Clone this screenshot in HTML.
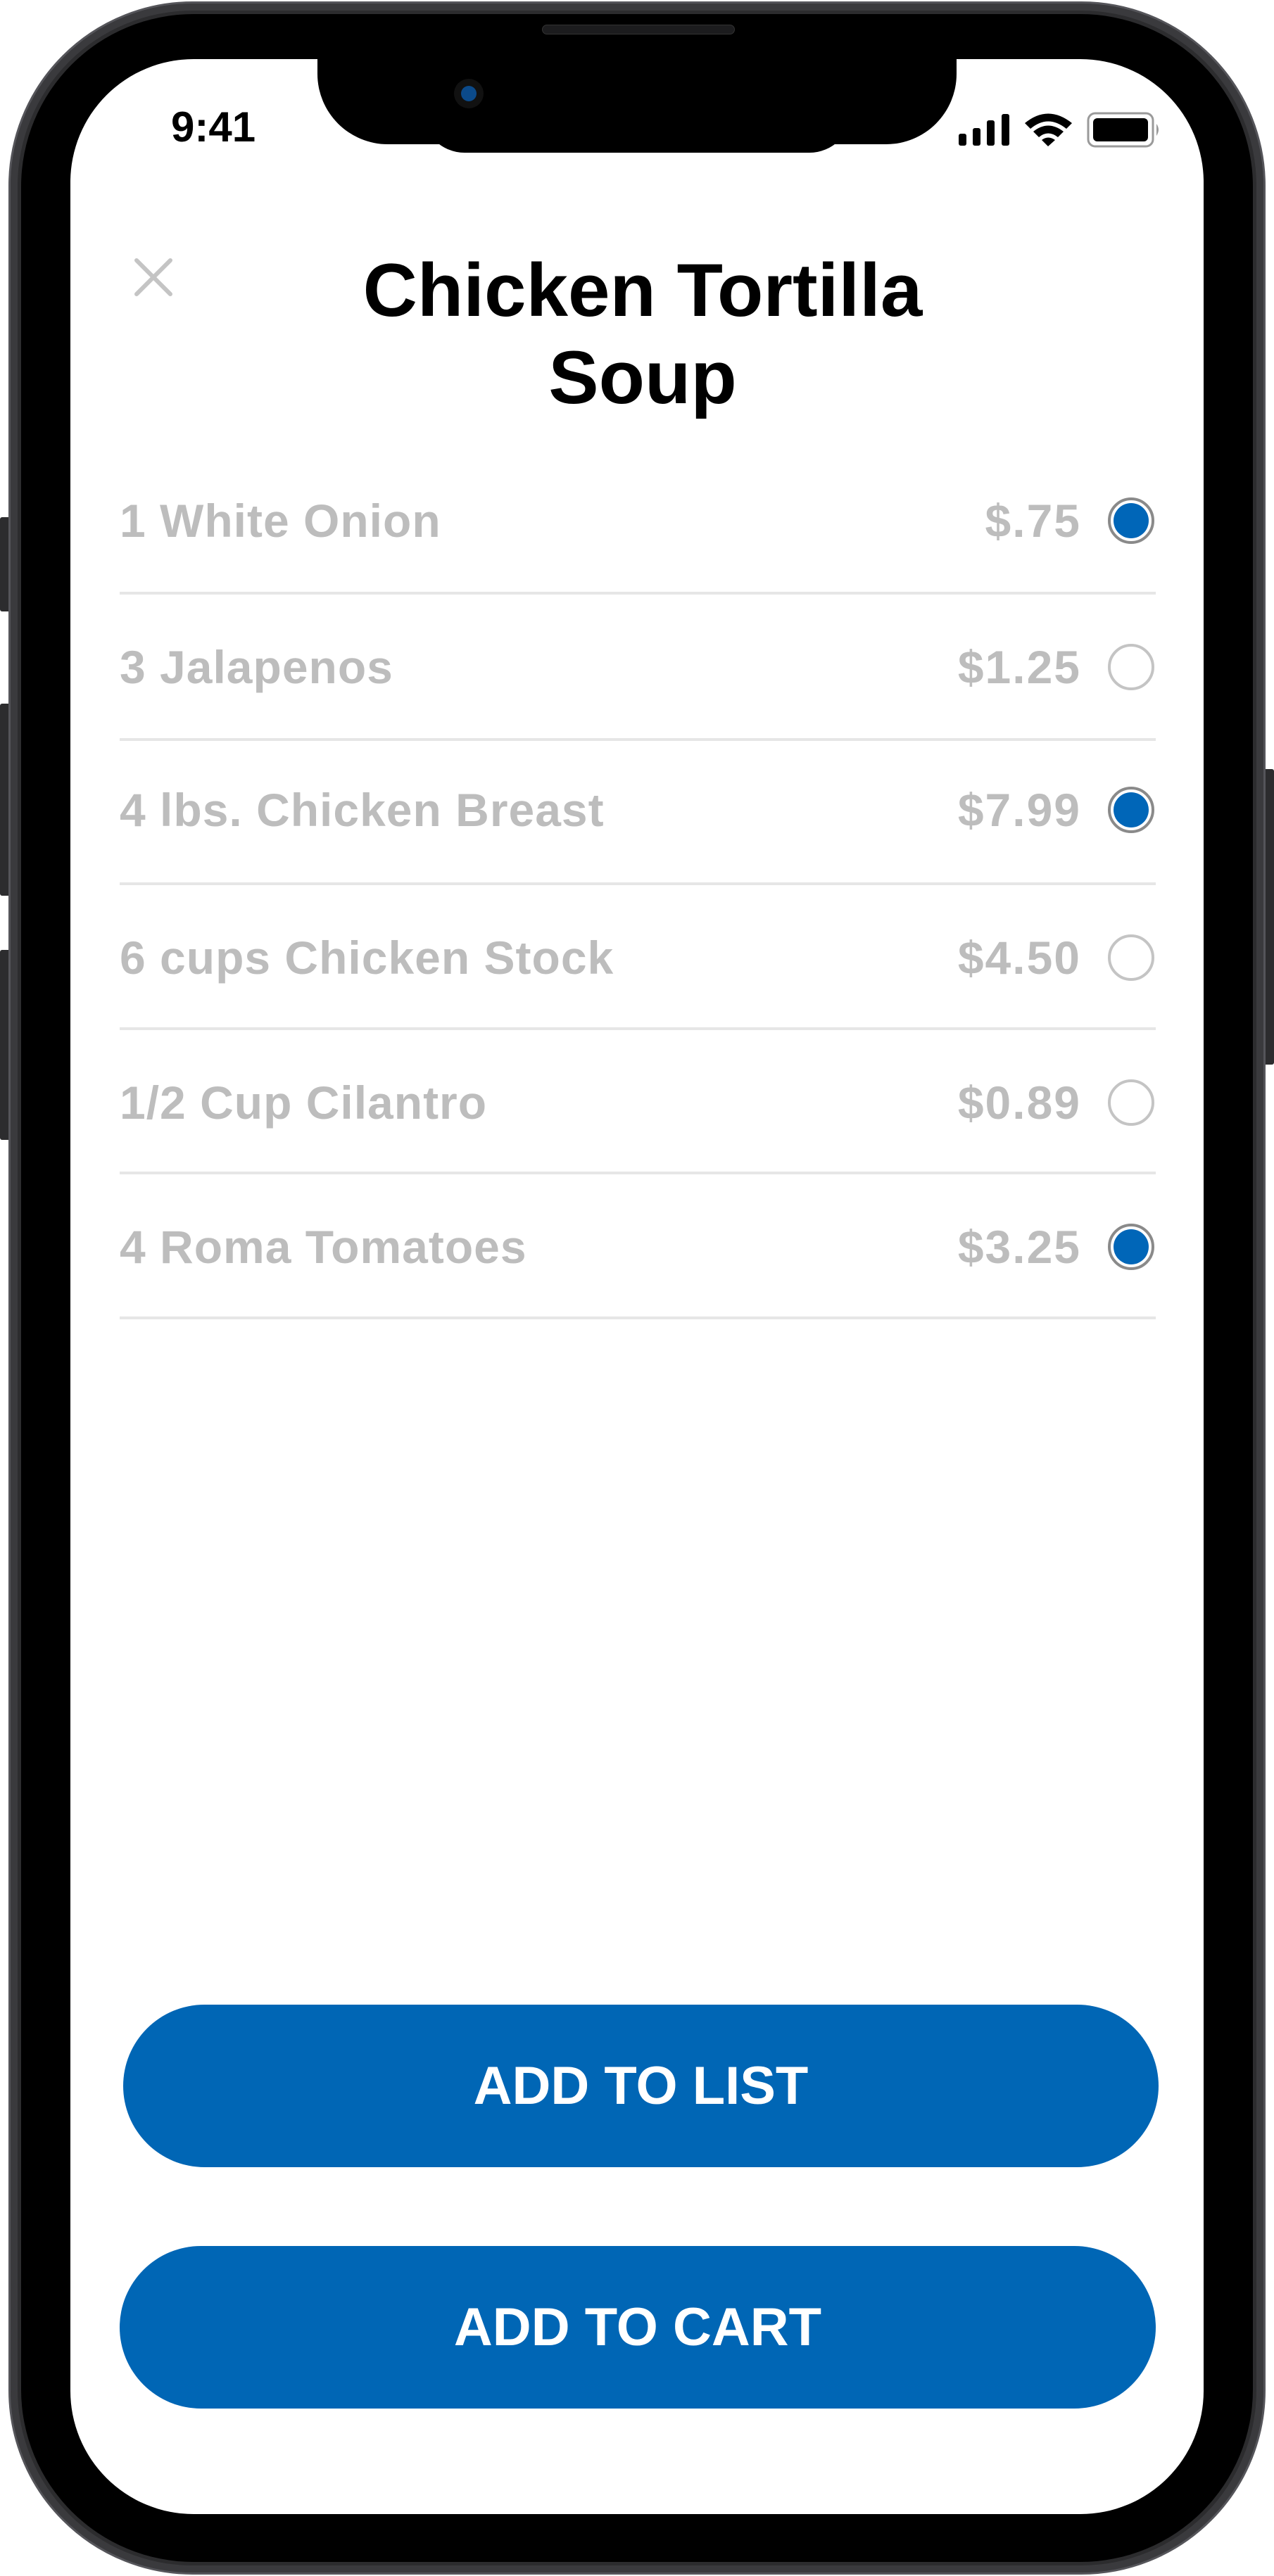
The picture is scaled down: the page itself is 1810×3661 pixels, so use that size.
<!DOCTYPE html>
<html><head><meta charset="utf-8"><style>
*{margin:0;padding:0;box-sizing:border-box}
body{width:1810px;height:3661px;background:#fff;position:relative;overflow:hidden;font-family:"Liberation Sans",sans-serif}
.abs{position:absolute}
.frame{left:12px;top:2px;width:1786px;height:3657px;border-radius:262px;background:#2c2c2e;border:3px solid #55555a;box-shadow:inset 0 0 0 10px #3a3a3d}
.bezel{left:30px;top:20px;width:1750px;height:3621px;border-radius:245px;background:#000}
.screen{left:100px;top:84px;width:1610px;height:3489px;border-radius:175px;background:#fff;overflow:hidden}
.side{background:#2c2c2e;border-radius:3px}
.item{position:absolute;left:170px;font-weight:bold;font-size:66px;letter-spacing:1px;color:#bdbdbd;line-height:80px}
.price{position:absolute;right:274px;font-weight:bold;font-size:66px;letter-spacing:2px;color:#bdbdbd;line-height:80px;text-align:right}
.sep{position:absolute;left:170px;width:1472px;height:4px;background:#e6e6e6}
.radio{position:absolute;left:1574px;width:66px;height:66px;border-radius:50%;border:4px solid #c4c4c4;background:#fff}
.radio.on{border-color:#8a8a8a}
.radio.on::after{content:"";position:absolute;left:4px;top:4px;right:4px;bottom:4px;border-radius:50%;background:#0066b8}
.btn{position:absolute;height:231px;border-radius:116px;background:#0066b5;color:#fff;font-weight:bold;font-size:76px;display:flex;align-items:center;justify-content:center}
</style></head><body>
<div class="abs side" style="left:0;top:735px;width:18px;height:134px"></div>
<div class="abs side" style="left:0;top:1000px;width:18px;height:273px"></div>
<div class="abs side" style="left:0;top:1350px;width:18px;height:270px"></div>
<div class="abs side" style="left:1792px;top:1093px;width:18px;height:420px"></div>
<div class="abs frame"></div>
<div class="abs bezel"></div>
<div class="abs" style="left:770px;top:35px;width:274px;height:14px;border-radius:7px;background:#1c1c1e;border:1px solid #333"></div>
<div class="abs screen"></div>
<div class="abs" style="left:451px;top:84px;width:908px;height:121px;background:#000;border-radius:0 0 100px 100px"></div>
<div class="abs" style="left:600px;top:150px;width:610px;height:67px;background:#000;border-radius:0 0 60px 60px"></div>
<div class="abs" style="left:645px;top:112px;width:42px;height:42px;border-radius:50%;background:#111"></div>
<div class="abs" style="left:655px;top:122px;width:22px;height:22px;border-radius:50%;background:#0b4a8a"></div>
<div class="abs" style="left:243px;top:146px;font-size:60px;font-weight:bold;color:#000;line-height:70px">9:41</div>
<svg class="abs" style="left:1355px;top:155px" width="300" height="60" viewBox="1355 155 300 60">
<rect x="1362" y="190" width="11" height="17" rx="3"/><rect x="1382" y="182" width="11" height="25" rx="3"/><rect x="1402" y="171" width="11" height="36" rx="3"/><rect x="1423" y="162" width="11" height="45" rx="3"/>
<path d="M1456 175 Q1489 148 1523 175 L1515 183 Q1489 162 1464 183Z"/><path d="M1468 187 Q1489 170 1511 187 L1503 195 Q1489 184 1476 195Z"/><path d="M1480 199 Q1489 192 1499 199 L1489 208Z"/>
<rect x="1546" y="161" width="92" height="47" rx="10" fill="none" stroke="#9a9a9a" stroke-width="3"/><rect x="1553" y="168" width="78" height="33" rx="6"/><path d="M1643 176 Q1649 184 1643 193Z" fill="#9a9a9a"/>
</svg>
<svg class="abs" style="left:188px;top:364px" width="60" height="60" viewBox="0 0 60 60"><path d="M6 6L54 54M54 6L6 54" stroke="#c4c4c4" stroke-width="6" stroke-linecap="round"/></svg>
<div class="abs" style="left:380px;width:1066px;top:350px;text-align:center;font-size:107px;font-weight:bold;line-height:124px;color:#000">Chicken Tortilla<br>Soup</div>
<div class="item" style="top:700px">1 White Onion</div><div class="price" style="top:700px">$.75</div><div class="radio on" style="top:707px"></div><div class="sep" style="top:841px"></div>
<div class="item" style="top:908px">3 Jalapenos</div><div class="price" style="top:908px">$1.25</div><div class="radio" style="top:915px"></div><div class="sep" style="top:1049px"></div>
<div class="item" style="top:1111px">4 lbs. Chicken Breast</div><div class="price" style="top:1111px">$7.99</div><div class="radio on" style="top:1118px"></div><div class="sep" style="top:1254px"></div>
<div class="item" style="top:1321px">6 cups Chicken Stock</div><div class="price" style="top:1321px">$4.50</div><div class="radio" style="top:1328px"></div><div class="sep" style="top:1460px"></div>
<div class="item" style="top:1527px">1/2 Cup Cilantro</div><div class="price" style="top:1527px">$0.89</div><div class="radio" style="top:1534px"></div><div class="sep" style="top:1665px"></div>
<div class="item" style="top:1732px">4 Roma Tomatoes</div><div class="price" style="top:1732px">$3.25</div><div class="radio on" style="top:1739px"></div><div class="sep" style="top:1871px"></div>
<div class="btn" style="left:175px;top:2849px;width:1471px">ADD TO LIST</div>
<div class="btn" style="left:170px;top:3192px;width:1472px">ADD TO CART</div>
</body></html>
